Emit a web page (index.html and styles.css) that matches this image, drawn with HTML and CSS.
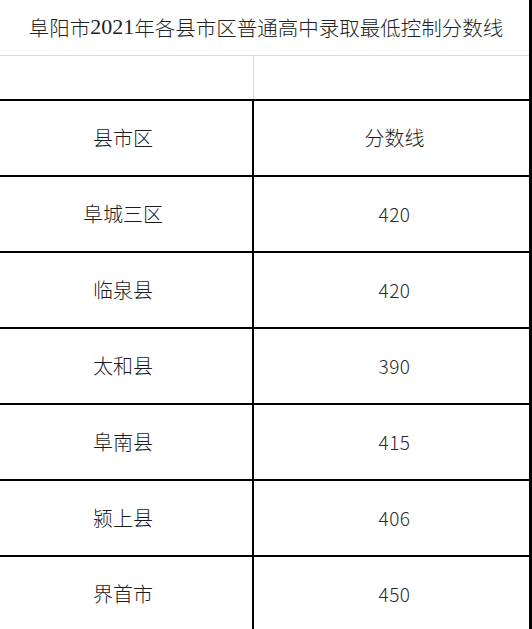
FILE: index.html
```html
<!DOCTYPE html>
<html lang="zh">
<head>
<meta charset="utf-8">
<title>阜阳市2021年各县市区普通高中录取最低控制分数线</title>
<link rel="stylesheet" href="styles.css">
</head>
<body>
<div class="page">
  <div class="content">
    <div class="title">阜阳市<span class="num">2021</span>年各县市区普通高中录取最低控制分数线</div>
    <div class="blank">
      <div class="bcell left"></div>
      <div class="bcell"></div>
    </div>
    <div class="table">
      <div class="row"><div class="cell left">县市区</div><div class="cell">分数线</div></div>
      <div class="row"><div class="cell left">阜城三区</div><div class="cell num">420</div></div>
      <div class="row"><div class="cell left">临泉县</div><div class="cell num">420</div></div>
      <div class="row"><div class="cell left">太和县</div><div class="cell num">390</div></div>
      <div class="row"><div class="cell left">阜南县</div><div class="cell num">415</div></div>
      <div class="row"><div class="cell left">颍上县</div><div class="cell num">406</div></div>
      <div class="row"><div class="cell left">界首市</div><div class="cell num">450</div></div>
    </div>
  </div>
  <div class="bar"></div>
</div>
</body>
</html>
```
FILE: styles.css
```css
html, body {
  margin: 0;
  padding: 0;
  background: #fff;
}
body {
  font-family: "Noto Sans CJK SC", "Noto Sans", sans-serif;
  color: #1e1e1e;
}
.page {
  display: flex;
  width: 532px;
  height: 629px;
  overflow: hidden;
}
.content {
  flex: 1;
  display: flex;
  flex-direction: column;
}
.content > * {
  flex-shrink: 0;
}
.bar {
  width: 3px;
  background: #000;
}
.title {
  height: 56px;
  box-sizing: border-box;
  border-bottom: 1px solid #d9d9d9;
  display: flex;
  align-items: center;
  justify-content: center;
  font-size: 20.5px;
  font-weight: 200;
  color: #222;
  padding-left: 3px;
  padding-bottom: 1px;
}
.title .num {
  font-family: "Liberation Serif", serif;
  font-size: 22px;
  font-weight: 400;
}
.blank {
  display: grid;
  grid-template-columns: 254px 1fr;
  height: 43px;
}
.bcell.left {
  border-right: 1px solid #d9d9d9;
}
.table {
  display: flex;
  flex-direction: column;
  border-top: 2px solid #000;
}
.row {
  display: grid;
  grid-template-columns: 254px 1fr;
  height: 76px;
  flex-shrink: 0;
  box-sizing: border-box;
  border-bottom: 2px solid #000;
}
.cell {
  display: flex;
  align-items: center;
  justify-content: center;
  font-size: 20px;
  font-weight: 200;
  color: #1a1a1a;
  padding-bottom: 2px;
}
.cell.left {
  border-right: 2px solid #000;
  box-sizing: border-box;
  padding-right: 6px;
}
.cell.num {
  font-size: 19px;
  font-weight: 300;
  letter-spacing: 0.5px;
  color: #2a2a2a;
  padding-left: 6px;
}
.row .cell:not(.left):not(.num) {
  padding-left: 6px;
}
```
